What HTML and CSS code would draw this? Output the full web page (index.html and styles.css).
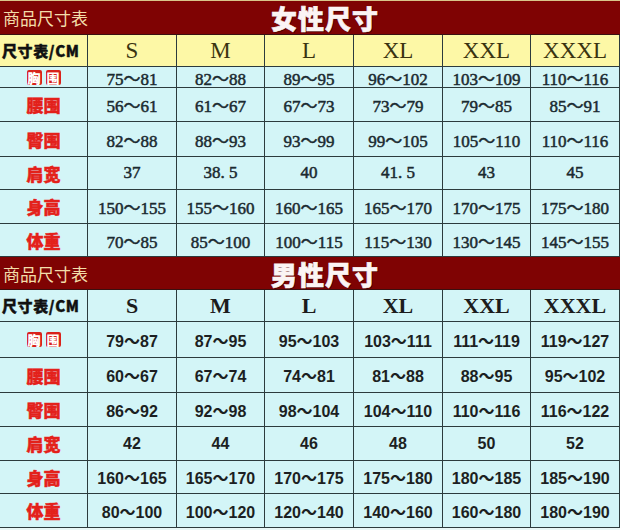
FILE: index.html
```html
<!DOCTYPE html>
<html lang="zh">
<head>
<meta charset="utf-8">
<title>商品尺寸表</title>
<link rel="stylesheet" href="styles.css">
</head>
<body>
<div class="chart">
  <section class="block women">
    <div class="title-bar">
      <span class="brand">商品尺寸表</span>
      <span class="big">女性尺寸</span>
    </div>
    <div class="grid">
      <div class="cell corner">尺寸表/CM</div>
      <div class="cell hd">S</div><div class="cell hd">M</div><div class="cell hd">L</div><div class="cell hd">XL</div><div class="cell hd">XXL</div><div class="cell hd">XXXL</div>

      <div class="cell lab"><span class="box">胸</span><span class="box">围</span></div>
      <div class="cell num">75～81</div><div class="cell num">82～88</div><div class="cell num">89～95</div><div class="cell num">96～102</div><div class="cell num">103～109</div><div class="cell num">110～116</div>

      <div class="cell lab"><span class="red">腰围</span></div>
      <div class="cell num">56～61</div><div class="cell num">61～67</div><div class="cell num">67～73</div><div class="cell num">73～79</div><div class="cell num">79～85</div><div class="cell num">85～91</div>

      <div class="cell lab"><span class="red">臀围</span></div>
      <div class="cell num">82～88</div><div class="cell num">88～93</div><div class="cell num">93～99</div><div class="cell num">99～105</div><div class="cell num">105～110</div><div class="cell num">110～116</div>

      <div class="cell lab"><span class="red">肩宽</span></div>
      <div class="cell num">37</div><div class="cell num">38. 5</div><div class="cell num">40</div><div class="cell num">41. 5</div><div class="cell num">43</div><div class="cell num">45</div>

      <div class="cell lab"><span class="red">身高</span></div>
      <div class="cell num">150～155</div><div class="cell num">155～160</div><div class="cell num">160～165</div><div class="cell num">165～170</div><div class="cell num">170～175</div><div class="cell num">175～180</div>

      <div class="cell lab"><span class="red">体重</span></div>
      <div class="cell num">70～85</div><div class="cell num">85～100</div><div class="cell num">100～115</div><div class="cell num">115～130</div><div class="cell num">130～145</div><div class="cell num">145～155</div>
    </div>
  </section>

  <section class="block men">
    <div class="title-bar">
      <span class="brand">商品尺寸表</span>
      <span class="big">男性尺寸</span>
    </div>
    <div class="grid">
      <div class="cell corner">尺寸表/CM</div>
      <div class="cell hd">S</div><div class="cell hd">M</div><div class="cell hd">L</div><div class="cell hd">XL</div><div class="cell hd">XXL</div><div class="cell hd">XXXL</div>

      <div class="cell lab"><span class="box">胸</span><span class="box">围</span></div>
      <div class="cell num">79～87</div><div class="cell num">87～95</div><div class="cell num">95～103</div><div class="cell num">103～111</div><div class="cell num">111～119</div><div class="cell num">119～127</div>

      <div class="cell lab"><span class="red">腰围</span></div>
      <div class="cell num">60～67</div><div class="cell num">67～74</div><div class="cell num">74～81</div><div class="cell num">81～88</div><div class="cell num">88～95</div><div class="cell num">95～102</div>

      <div class="cell lab"><span class="red">臀围</span></div>
      <div class="cell num">86～92</div><div class="cell num">92～98</div><div class="cell num">98～104</div><div class="cell num">104～110</div><div class="cell num">110～116</div><div class="cell num">116～122</div>

      <div class="cell lab"><span class="red">肩宽</span></div>
      <div class="cell num">42</div><div class="cell num">44</div><div class="cell num">46</div><div class="cell num">48</div><div class="cell num">50</div><div class="cell num">52</div>

      <div class="cell lab"><span class="red">身高</span></div>
      <div class="cell num">160～165</div><div class="cell num">165～170</div><div class="cell num">170～175</div><div class="cell num">175～180</div><div class="cell num">180～185</div><div class="cell num">185～190</div>

      <div class="cell lab"><span class="red">体重</span></div>
      <div class="cell num">80～100</div><div class="cell num">100～120</div><div class="cell num">120～140</div><div class="cell num">140～160</div><div class="cell num">160～180</div><div class="cell num">180～190</div>
    </div>
  </section>
</div>
</body>
</html>
```

FILE: styles.css
```css
* { box-sizing: border-box; margin: 0; padding: 0; }

html, body {
  width: 620px;
  height: 530px;
  background: #e9f7f6;
  overflow: hidden;
}

body {
  font-family: "Liberation Serif", "Noto Sans CJK SC", serif;
}

.chart {
  width: 620px;
  display: flex;
  flex-direction: column;
}

.title-bar {
  display: flex;
  align-items: center;
  background: #7f0303;
  border-bottom: 1px solid #3a1010;
}

.women .title-bar { height: 35px; border-top: 1px solid #d9c58a; }
.men .title-bar { height: 33px; }

.brand {
  width: 88px;
  padding-left: 3px;
  font-family: "Noto Sans CJK SC", sans-serif;
  font-size: 17px;
  color: #f3deaa;
  white-space: nowrap;
}

.big {
  margin-left: 183px;
  font-family: "Noto Sans CJK SC", sans-serif;
  font-weight: 900;
  font-size: 26px;
  letter-spacing: 1px;
  color: #fbf4f4;
  -webkit-text-stroke: 0.6px #fbf4f4;
  text-shadow: 1px 1px 0 #4a0000;
}

.grid {
  display: grid;
  grid-template-columns: 88px 89px 88px 89px 89px 88px 89px;
}

.women .grid { grid-template-rows: 32px 21px 34px 35px 33px 34px 33px; }
.men .grid { grid-template-rows: 32px 36px 35px 34px 34px 33px 34px; }

.cell {
  display: flex;
  align-items: center;
  justify-content: center;
  background: #d3f5f7;
  border-right: 1px solid #2c3b3d;
  border-bottom: 1px solid #2c3b3d;
  white-space: nowrap;
}

.women .hd, .women .corner { background: #fdf8a6; }
.men .hd, .men .corner { background: #d3f5f7; }

.corner {
  font-family: "Noto Sans CJK SC", sans-serif;
  font-weight: 900;
  font-size: 15px;
  letter-spacing: 0.6px;
  color: #111;
  -webkit-text-stroke: 0.4px #111;
  justify-content: flex-start;
  padding-left: 2px;
}

.hd {
  font-family: "Liberation Serif", serif;
  font-size: 23px;
  color: #3a3410;
}

.men .hd {
  font-weight: bold;
  color: #1c1c1c;
  font-size: 22px;
}

.women .num {
  font-family: "Liberation Serif", "Noto Sans CJK SC", serif;
  font-size: 17px;
  color: #1b2a30;
  -webkit-text-stroke: 0.5px #1b2a30;
}

.men .num {
  font-family: "Liberation Sans", "Noto Sans CJK SC", sans-serif;
  font-weight: bold;
  font-size: 16px;
  color: #1c1f22;
}

.lab { gap: 4px; }

.red {
  font-family: "Noto Sans CJK SC", sans-serif;
  font-weight: 900;
  font-size: 17px;
  color: #e3211b;
  -webkit-text-stroke: 0.5px #e3211b;
  text-shadow: 0 0 1px #ffffff;
}

.box {
  width: 15px;
  height: 15px;
  background: #d9221c;
  border-radius: 2px;
  color: #fff;
  font-family: "Noto Sans CJK SC", sans-serif;
  font-weight: 900;
  font-size: 13px;
  line-height: 15px;
  text-align: center;
}
```
